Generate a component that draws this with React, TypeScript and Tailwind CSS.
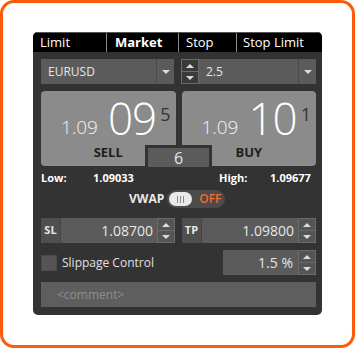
import React from "react";

const ui = "font-['Open_Sans',sans-serif]";

function Tri({ up }: { up?: boolean }) {
  return up ? (
    <span className="w-0 h-0 border-x-[4px] border-x-transparent border-b-[4px] border-b-[#dcdcdc]" />
  ) : (
    <span className="w-0 h-0 border-x-[4px] border-x-transparent border-t-[4px] border-t-[#dcdcdc]" />
  );
}

function Spinner({ dark }: { dark?: boolean }) {
  return (
    <div
      className={`flex flex-col w-[18px] shrink-0 border border-[#6b6b6b] ${
        dark ? "bg-[#3a3a3a]" : "bg-[#555]"
      }`}
    >
      <div className="flex-1 flex items-center justify-center border-b border-[#6b6b6b]">
        <Tri up />
      </div>
      <div className="flex-1 flex items-center justify-center">
        <Tri />
      </div>
    </div>
  );
}

function Select({ value, className }: { value: string; className?: string }) {
  return (
    <div className={`flex h-[25px] bg-[#5b5b5b] ${className}`}>
      <div className="flex-1 flex items-center pl-[7px] text-[12px] text-[#e6e6e6]">{value}</div>
      <div className="w-[18px] flex items-center justify-center border-l border-[#4a4a4a]">
        <Tri />
      </div>
    </div>
  );
}

function PriceTile({ big, sup, label }: { big: string; sup: string; label: string }) {
  return (
    <div className="flex-1 h-[75px] bg-[#8b8b8b] rounded-[4px] flex flex-col">
      <div className="flex items-start justify-end pr-[5px] h-[50px]">
        <span className="text-[19px] font-light text-[#f2f2f2] mt-[27px] mr-[10px] leading-none">1.09</span>
        <span className="text-[44px] font-light text-white leading-[36px] mt-[9px] tracking-[-1px]">{big}</span>
        <span className="text-[18px] text-[#333] leading-none ml-[4px] mt-[14px]">{sup}</span>
      </div>
      <div className="text-[13px] font-bold text-[#1e1e1e] leading-none text-center mt-[5px]">{label}</div>
    </div>
  );
}

function FieldGroup({ label, value }: { label: string; value: string }) {
  return (
    <div className="flex h-[25px] w-[134px]">
      <div className="w-[20px] flex items-center justify-center bg-[#4f4f4f] border-r border-[#444] text-[11px] font-bold text-[#e8e8e8]">
        {label}
      </div>
      <div className="flex-1 flex items-center justify-end pr-[4px] bg-[#5b5b5b] text-[14px] text-[#e6e6e6]">
        {value}
      </div>
      <Spinner />
    </div>
  );
}

export default function App() {
  return (
    <div className={`w-[355px] h-[348px] bg-white ${ui}`}>
      <div className="w-[355px] h-[348px] border-[3px] border-[#ff5a0a] rounded-[14px] pl-[30px] pt-[29px]">
        <div className="w-[289px] h-[283px] bg-[#333] rounded-[5px] overflow-hidden flex flex-col">
          {/* tabs */}
          <div className="flex h-[20px] bg-black border-t border-[#555] text-[13px] text-white leading-none">
            <div className="w-[73px] flex items-center pl-[7px]">Limit</div>
            <div className="w-[72px] flex items-center pl-[8px] border-l border-[#888] font-bold">Market</div>
            <div className="w-[58px] flex items-center pl-[7px] border-l border-[#888]">Stop</div>
            <div className="flex-1 flex items-center pl-[6px] border-l border-[#888]">Stop Limit</div>
          </div>

          <div className="flex flex-col pl-[8px] pr-[6px]">
            {/* symbol + amount */}
            <div className="flex mt-[7px] gap-[7px]">
              <Select value="EURUSD" className="w-[133px]" />
              <div className="flex flex-1">
                <Spinner dark />
                <Select value="2.5" className="flex-1" />
              </div>
            </div>

            {/* prices */}
            <div className="relative flex gap-[6px] mt-[7px]">
              <PriceTile big="09" sup="5" label="SELL" />
              <PriceTile big="10" sup="1" label="BUY" />
              <div className="absolute left-[104px] top-[54px] w-[67px] h-[25px] border-[3px] border-[#333] bg-[#5b5b5b] flex items-center justify-center text-[16px] text-[#e6e6e6]">
                6
              </div>
            </div>

            {/* low / high */}
            <div className="flex h-[22px] items-center text-[11px] font-bold text-white mt-[1px]">
              <span className="w-[52px]">Low:</span>
              <span className="w-[126px]">1.09033</span>
              <span className="w-[51px]">High:</span>
              <span>1.09677</span>
            </div>

            {/* vwap */}
            <div className="flex items-center h-[18px] mt-[1px] pl-[88px]">
              <span className="text-[12px] font-bold text-[#e8e8e8] mr-[3px]">VWAP</span>
              <div className="flex items-center w-[58px] h-[18px] rounded-full bg-[#4b4b4b] pl-[2px]">
                <div className="w-[23px] h-[14px] rounded-full bg-[#e9e9e9] flex items-center justify-center gap-[2px]">
                  <span className="w-[1px] h-[7px] bg-[#888]" />
                  <span className="w-[1px] h-[7px] bg-[#888]" />
                  <span className="w-[1px] h-[7px] bg-[#888]" />
                </div>
                <span className="ml-[7px] text-[12px] font-semibold text-[#f26a2e]">OFF</span>
              </div>
            </div>

            {/* SL / TP */}
            <div className="flex justify-between mt-[10px]">
              <FieldGroup label="SL" value="1.08700" />
              <FieldGroup label="TP" value="1.09800" />
            </div>

            {/* slippage */}
            <div className="flex items-center mt-[7px] h-[25px]">
              <div className="w-[16px] h-[16px] bg-[#555] border border-[#4a4a4a]" />
              <span className="ml-[5px] text-[12px] text-[#e0e0e0]">Slippage Control</span>
              <div className="ml-auto flex h-[25px] w-[93px]">
                <div className="flex-1 flex items-center justify-end pr-[5px] bg-[#5b5b5b] text-[14px] text-[#e6e6e6]">
                  1.5 %
                </div>
                <Spinner />
              </div>
            </div>

            {/* comment */}
            <div className="mt-[7px] h-[25px] bg-[#5e5e5e] flex items-center pl-[16px] text-[12px] text-[#8e8e8e]">
              &lt;comment&gt;
            </div>
          </div>
        </div>
      </div>
    </div>
  );
}
